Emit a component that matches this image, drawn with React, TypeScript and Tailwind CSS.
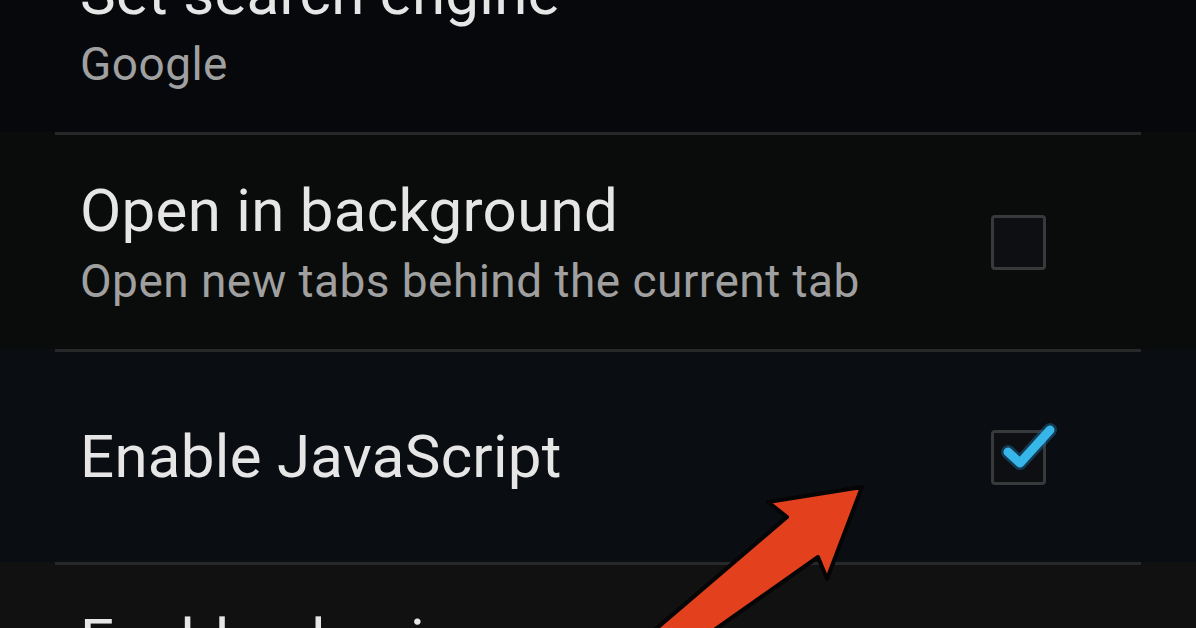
import { Fragment } from 'react'

interface Pref {
  title: string
  summary?: string
  checkbox?: 'on' | 'off'
  height: string
  bg: string
}

const prefs: Pref[] = [
  { title: 'Set search engine', summary: 'Google', height: 'h-[214px]', bg: 'bg-[#06080b]' },
  {
    title: 'Open in background',
    summary: 'Open new tabs behind the current tab',
    checkbox: 'off',
    height: 'h-[214px]',
    bg: 'bg-[#0a0b0b]',
  },
  { title: 'Enable JavaScript', checkbox: 'on', height: 'h-[210px]', bg: 'bg-[#0a0d12]' },
  { title: 'Enable plug-ins', summary: 'Always on', height: 'h-[214px]', bg: 'bg-[#111111]' },
]

function CheckBox({ checked }: { checked: boolean }) {
  return (
    <div className="relative w-[55px] h-[55px] shrink-0">
      <div className="w-full h-full rounded-[4px] border-[3px] border-[#37393a] bg-[#0d0f12]" />
      {checked && (
        <svg
          className="absolute -top-[5px] left-[8px] w-[56px] h-[50px] overflow-visible"
          viewBox="0 0 56 50"
        >
          <path
            d="M9 27 L21 38 L51 5"
            fill="none"
            stroke="#1e6fa0"
            strokeWidth="14"
            strokeLinecap="round"
            strokeLinejoin="round"
            opacity="0.45"
          />
          <path
            d="M9 27 L21 38 L51 5"
            fill="none"
            stroke="#37b6ea"
            strokeWidth="9"
            strokeLinecap="round"
            strokeLinejoin="round"
          />
        </svg>
      )}
    </div>
  )
}

export default function App() {
  return (
    <div
      className="relative w-[1196px] h-[628px] overflow-hidden bg-[#0b0b0b]"
      style={{ fontFamily: 'Roboto, "Noto Sans", sans-serif' }}
    >
      <div className="-mt-[82px] flex flex-col">
        {prefs.map((p, i) => (
          <Fragment key={p.title}>
            {i > 0 && (
              <div className={`${p.bg} px-[55px]`}>
                <div className="h-[3px] bg-[#262829]" />
              </div>
            )}
            <div className={`${p.height} ${p.bg} flex items-center pl-[80px] pr-[150px]`}>
              <div className="flex-1 flex flex-col">
                <div className="text-[60px] leading-[72px] text-[#e6e6e6] tracking-[0.3px]">
                  {p.title}
                </div>
                {p.summary && (
                  <div className="mt-[6px] text-[46px] leading-[56px] text-[#a0a0a0] tracking-[0.45px]">
                    {p.summary}
                  </div>
                )}
              </div>
              {p.checkbox && <CheckBox checked={p.checkbox === 'on'} />}
            </div>
          </Fragment>
        ))}
      </div>

      {/* red annotation arrow */}
      <svg className="absolute inset-0 w-full h-full pointer-events-none" viewBox="0 0 1196 628">
        <polygon
          points="862,487 768,502 787,517 643,640 700,640 818,557 827,579"
          fill="#e3401e"
          stroke="#050505"
          strokeWidth="4"
          strokeLinejoin="round"
        />
      </svg>
    </div>
  )
}
